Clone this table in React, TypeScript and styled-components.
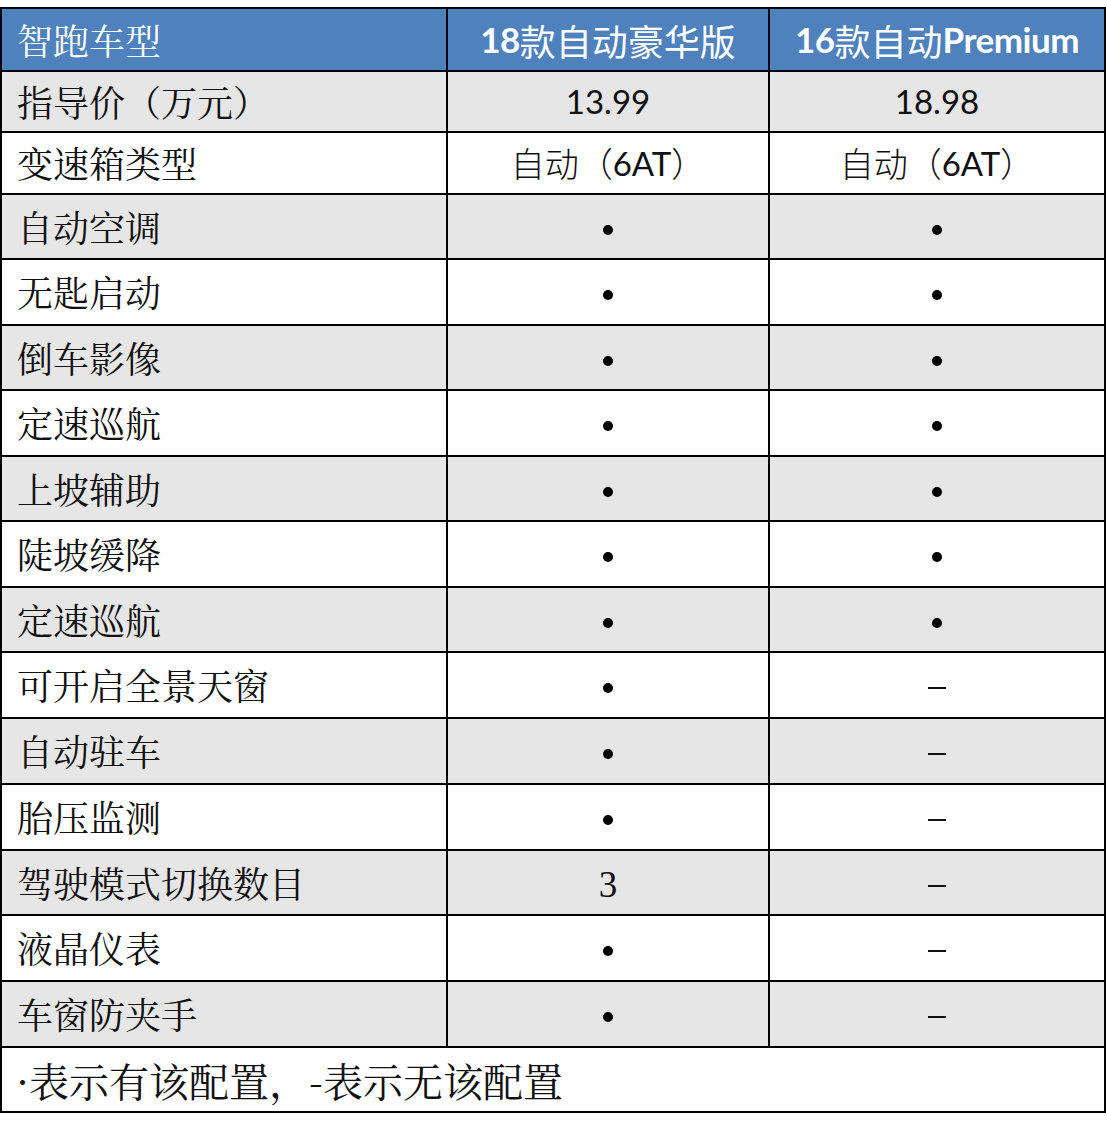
import React from "react";
import styled, { createGlobalStyle } from "styled-components";

const GlobalStyle = createGlobalStyle`
  html, body {
    margin: 0;
    padding: 0;
    background: #ffffff;
  }
  body {
    font-family: "Noto Sans CJK SC", "Noto Sans", sans-serif;
  }
`;

const SERIF_CJK = `"Noto Serif CJK SC", "Noto Sans CJK SC", "Liberation Serif", serif`;
const LATIN = `"Lato", "Noto Sans CJK SC", sans-serif`;

const Page = styled.div`
  padding-top: 7px;
`;

const Table = styled.div`
  width: 1106px;
  box-sizing: border-box;
  display: flex;
  flex-direction: column;
  gap: 2px;
  padding: 2px;
  background: #000000;
`;

type Tone = "head" | "gray" | "white";

const toneBg: Record<Tone, string> = {
  head: "#4f81bd",
  gray: "#e6e6e6",
  white: "#ffffff",
};

const Row = styled.div<{ $h: number }>`
  display: grid;
  grid-template-columns: 444px 320px 334px;
  gap: 2px;
  height: ${(p) => p.$h}px;
`;

const FooterRow = styled.div<{ $h: number }>`
  display: grid;
  grid-template-columns: 1fr;
  height: ${(p) => p.$h}px;
`;

const LabelCell = styled.div<{ $tone: Tone }>`
  display: flex;
  align-items: center;
  padding-left: 15px;
  background: ${(p) => toneBg[p.$tone]};
  color: ${(p) => (p.$tone === "head" ? "#ffffff" : "#111111")};
  font-family: ${SERIF_CJK};
  font-size: 36px;
  line-height: 1;
  white-space: nowrap;
  overflow: hidden;
`;

const ValueCell = styled.div<{ $tone: Tone }>`
  display: flex;
  align-items: center;
  justify-content: center;
  background: ${(p) => toneBg[p.$tone]};
  color: #111111;
  font-family: ${LATIN};
  font-size: 33px;
  line-height: 1;
  white-space: nowrap;
`;

const HeadCell = styled.div`
  display: flex;
  align-items: center;
  justify-content: center;
  background: ${toneBg.head};
  color: #ffffff;
  font-family: ${LATIN};
  font-size: 36px;
  line-height: 1;
  white-space: nowrap;
`;

const HeadLatin = styled.span`
  font-family: "Lato", sans-serif;
  font-weight: 700;
  font-size: 35px;
  letter-spacing: -0.5px;
`;

const HeadCjk = styled.span`
  font-family: "Noto Sans CJK SC", sans-serif;
  font-weight: 400;
`;

const CjkPart = styled.span`
  font-family: "Noto Sans CJK SC", sans-serif;
  font-weight: 300;
  font-size: 34px;
`;

const SerifNum = styled.span`
  font-family: "Liberation Serif", serif;
  font-size: 37px;
  margin-top: 4px;
`;

const Dot = styled.span`
  display: block;
  width: 10px;
  height: 10px;
  border-radius: 50%;
  background: #000000;
  margin-top: 6px;
`;

const Dash = styled.span`
  display: block;
  width: 18px;
  height: 2px;
  background: #111111;
  margin-top: 6px;
`;

const Note = styled.div`
  display: flex;
  align-items: center;
  padding-left: 14px;
  background: #ffffff;
  color: #111111;
  font-family: ${SERIF_CJK};
  font-size: 40px;
  line-height: 1;
  white-space: nowrap;
`;

type Val = "dot" | "dash" | string;

const features: { label: string; a: Val; b: Val }[] = [
  { label: "自动空调", a: "dot", b: "dot" },
  { label: "无匙启动", a: "dot", b: "dot" },
  { label: "倒车影像", a: "dot", b: "dot" },
  { label: "定速巡航", a: "dot", b: "dot" },
  { label: "上坡辅助", a: "dot", b: "dot" },
  { label: "陡坡缓降", a: "dot", b: "dot" },
  { label: "定速巡航", a: "dot", b: "dot" },
  { label: "可开启全景天窗", a: "dot", b: "dash" },
  { label: "自动驻车", a: "dot", b: "dash" },
  { label: "胎压监测", a: "dot", b: "dash" },
  { label: "驾驶模式切换数目", a: "3", b: "dash" },
  { label: "液晶仪表", a: "dot", b: "dash" },
  { label: "车窗防夹手", a: "dot", b: "dash" },
];

const heights = [63, 64, 63, 64, 63, 64, 63, 64, 64, 64, 63, 64, 64];
const footerHeight = 63;

function renderVal(v: Val) {
  if (v === "dot") return <Dot />;
  if (v === "dash") return <Dash />;
  return <SerifNum>{v}</SerifNum>;
}

function Gearbox() {
  return (
    <>
      <CjkPart>自动（</CjkPart>6AT<CjkPart>）</CjkPart>
    </>
  );
}

export default function App() {
  return (
    <Page>
      <GlobalStyle />
      <Table>
        <Row $h={61}>
          <LabelCell $tone="head">智跑车型</LabelCell>
          <HeadCell>
            <HeadLatin>18</HeadLatin>
            <HeadCjk>款自动豪华版</HeadCjk>
          </HeadCell>
          <HeadCell>
            <HeadLatin>16</HeadLatin>
            <HeadCjk>款自动</HeadCjk>
            <HeadLatin>Premium</HeadLatin>
          </HeadCell>
        </Row>
        <Row $h={59}>
          <LabelCell $tone="gray">指导价（万元）</LabelCell>
          <ValueCell $tone="gray">13.99</ValueCell>
          <ValueCell $tone="gray">18.98</ValueCell>
        </Row>
        <Row $h={60}>
          <LabelCell $tone="white">变速箱类型</LabelCell>
          <ValueCell $tone="white">
            <Gearbox />
          </ValueCell>
          <ValueCell $tone="white">
            <Gearbox />
          </ValueCell>
        </Row>
        {features.map((f, i) => {
          const tone: Tone = i % 2 === 0 ? "gray" : "white";
          return (
            <Row key={i} $h={heights[i]}>
              <LabelCell $tone={tone}>{f.label}</LabelCell>
              <ValueCell $tone={tone}>{renderVal(f.a)}</ValueCell>
              <ValueCell $tone={tone}>{renderVal(f.b)}</ValueCell>
            </Row>
          );
        })}
        <FooterRow $h={footerHeight}>
          <Note>·表示有该配置，-表示无该配置</Note>
        </FooterRow>
      </Table>
    </Page>
  );
}
